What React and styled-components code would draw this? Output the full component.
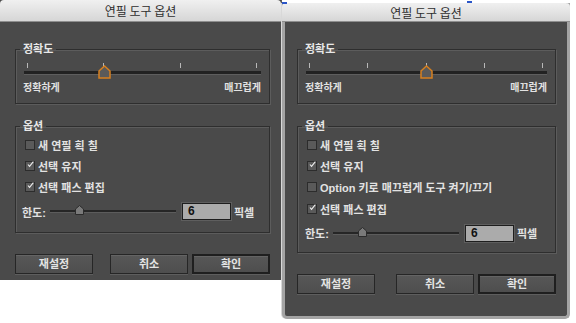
import styled, { createGlobalStyle } from 'styled-components'

const GlobalStyle = createGlobalStyle`
    html, body {
        margin: 0;
        padding: 0;
        background: #ffffff;
    }
    body {
        width: 576px;
        height: 323px;
        overflow: hidden;
        font-family: "Liberation Sans", "Noto Sans CJK KR", sans-serif;
    }
`

const checks = [
    { label: '새 연필 획 칠', on: false },
    { label: '선택 유지', on: true },
    { label: 'Option 키로 매끄럽게 도구 켜기/끄기', on: false, wide: true },
    { label: '선택 패스 편집', on: true },
]

function Check({ on, label }) {
    return (
        <CheckRow>
            <Box>
                {on && (
                    <svg width="11" height="11" viewBox="0 0 11 11">
                        <path d="M1.5 5.5 L4 8.5 L10 1" fill="none" stroke="#f0f0f0" strokeWidth="1.6" />
                    </svg>
                )}
            </Box>
            <span>{label}</span>
        </CheckRow>
    )
}

function Slider({ ticks, value }) {
    return (
        <SliderWrap>
            <Ticks>
                {Array.from({ length: ticks }).map((_, i) => <Tick key={i} />)}
            </Ticks>
            <Track>
                <Thumb $pos={value}>
                    <svg width="13" height="14" viewBox="0 0 13 14">
                        <path d="M1 6 L6.5 1 L12 6 L12 13 L1 13 Z" fill="#5a5a5a" stroke="#d7801f" strokeWidth="1.5" />
                    </svg>
                </Thumb>
            </Track>
            <Ends>
                <span>정확하게</span>
                <span>매끄럽게</span>
            </Ends>
        </SliderWrap>
    )
}

function Dialog({ wide }) {
    const list = checks.filter(c => wide || !c.wide)
    return (
        <Window $wide={wide}>
            <TitleBar $wide={wide}>연필 도구 옵션</TitleBar>
            <Body $wide={wide}>
                <Group>
                    <Legend>정확도</Legend>
                    <Slider ticks={wide ? 5 : 4} value={wide ? 50 : 33.3} />
                </Group>

                <Group $gap>
                    <Legend>옵션</Legend>
                    <Checks>
                        {list.map(c => <Check key={c.label} on={c.on} label={c.label} />)}
                    </Checks>
                    <LimitRow $wide={wide}>
                        <span>한도:</span>
                        <MiniTrack>
                            <MiniThumb>
                                <svg width="9" height="10" viewBox="0 0 9 10">
                                    <path d="M0.5 4 L4.5 0.5 L8.5 4 L8.5 9.5 L0.5 9.5 Z" fill="#7a7a7a" stroke="#2c2c2c" strokeWidth="1" />
                                </svg>
                            </MiniThumb>
                        </MiniTrack>
                        <Field>6</Field>
                        <span>픽셀</span>
                    </LimitRow>
                </Group>

                <Buttons>
                    <Button>재설정</Button>
                    <Button $push>취소</Button>
                    <Button $primary>확인</Button>
                </Buttons>
            </Body>
        </Window>
    )
}

export default function App() {
    return (
        <>
            <GlobalStyle />
            <Page>
                <Mark $x={282} $y={2} />
                <Mark $x={467} $y={1} />
                <Dialog />
                <Dialog wide />
            </Page>
        </>
    )
}

const Page = styled.div`
    position: relative;
    display: flex;
    align-items: flex-start;
    width: 576px;
    height: 323px;
`

const Mark = styled.div`
    position: absolute;
    left: ${p => p.$x}px;
    top: ${p => p.$y}px;
    width: 5px;
    height: 2px;
    background: #2a55c8;
    z-index: 2;
`

const Window = styled.div`
    box-sizing: border-box;
    display: flex;
    flex-direction: column;
    background: #4a4a4a;
    width: ${p => p.$wide ? '288px' : '281px'};
    height: ${p => p.$wide ? '316px' : '280px'};
    margin-top: ${p => p.$wide ? '3px' : '0'};
    margin-left: ${p => p.$wide ? '1px' : '0'};
    border: ${p => p.$wide ? '3px solid #a4a4a4' : '0'};
    border-top: 0;
    border-bottom-left-radius: ${p => p.$wide ? '5px' : '0'};
    border-bottom-right-radius: ${p => p.$wide ? '5px' : '0'};
    box-shadow: ${p => p.$wide ? '-1px 0 0 #d8d8d8' : '1px 0 0 #5c5c5c'};
`

const TitleBar = styled.div`
    box-sizing: border-box;
    height: ${p => p.$wide ? '19px' : '22px'};
    background: linear-gradient(#f0f0f0, #d6d6d6);
    border-bottom: 1px solid #8e8e8e;
    border-top-left-radius: 4px;
    border-top-right-radius: 4px;
    color: #2e2e2e;
    font-family: "Noto Sans CJK KR", sans-serif;
    font-size: 12px;
    line-height: ${p => p.$wide ? '19px' : '22px'};
    text-align: center;
    margin: ${p => p.$wide ? '0 -3px' : '0'};
`

const Body = styled.div`
    flex: 1;
    display: flex;
    flex-direction: column;
    padding: ${p => p.$wide ? '20px 11px 0 12px' : '20px 11px 0 15px'};
    color: #e2e2e2;
    font-family: "Liberation Sans", "Noto Sans CJK KR", sans-serif;
    font-size: 11px;
    font-weight: 700;
`

const Group = styled.fieldset`
    margin: ${p => p.$gap ? '15px 0 0' : '0'};
    padding: 0 0 0;
    border: 1px solid #2e2e2e;
    box-shadow: 1px 1px 0 #5c5c5c, inset 1px 1px 0 #5c5c5c;
    min-width: 0;
`

const Legend = styled.legend`
    margin-left: 4px;
    padding: 0 3px;
    line-height: 14px;
    font-size: 11px;
    color: #e8e8e8;
`

const SliderWrap = styled.div`
    padding: 7px 8px 9px;
`

const Ticks = styled.div`
    display: flex;
    justify-content: space-between;
    padding: 0 4px 0 3px;
    height: 6px;
`

const Tick = styled.div`
    width: 1px;
    height: 5px;
    background: #b8b8b8;
`

const Track = styled.div`
    position: relative;
    height: 3px;
    margin: 2px 0 0;
    background: #222;
    border-bottom: 1px solid #5e5e5e;
`

const Thumb = styled.div`
    position: absolute;
    top: -6px;
    left: calc(3px + (100% - 7px) * ${p => p.$pos / 100});
    width: 13px;
    height: 14px;
    margin-left: -6px;
    line-height: 0;
`

const Ends = styled.div`
    display: flex;
    justify-content: space-between;
    margin: 7px 0 0 -1px;
    line-height: 12px;
    font-size: 10px;
`

const Checks = styled.div`
    display: flex;
    flex-direction: column;
    padding: 1px 0 0 9px;
`

const CheckRow = styled.div`
    display: flex;
    align-items: center;
    gap: 3px;
    height: 21.3px;
`

const Box = styled.div`
    box-sizing: border-box;
    width: 10px;
    height: 10px;
    background: #5a5a5a;
    border: 1px solid #2c2c2c;
    display: flex;
    align-items: center;
    justify-content: center;
    overflow: visible;

    svg {
        margin: -3px 0 0 1px;
    }
`

const LimitRow = styled.div`
    display: flex;
    align-items: center;
    height: 22px;
    padding: ${p => p.$wide ? '3px 0 8px 7px' : '3px 0 9px 6px'};
`

const MiniTrack = styled.div`
    position: relative;
    width: 126px;
    height: 2px;
    margin: 0 6px 0 4px;
    background: #262626;
    border-bottom: 1px solid #5c5c5c;
`

const MiniThumb = styled.div`
    position: absolute;
    left: 25px;
    top: -5px;
    line-height: 0;
`

const Field = styled.div`
    box-sizing: border-box;
    width: 49px;
    height: 17px;
    padding-left: 5px;
    background: #ababab;
    border: 1px solid #1e1e1e;
    box-shadow: 0 0 0 1px #5e5e5e;
    color: #111;
    font-size: 12px;
    line-height: 15px;
    margin-right: 3px;
`

const Buttons = styled.div`
    display: flex;
    gap: 4px;
    margin-top: 21px;
`

const Button = styled.div`
    box-sizing: border-box;
    width: 78px;
    height: 20px;
    margin-left: ${p => p.$push ? 'auto' : '0'};
    background: linear-gradient(#575757, #4e4e4e);
    border: ${p => p.$primary ? '2px solid #1f1f1f' : '1px solid #262626'};
    box-shadow: 0 1px 0 #5e5e5e, inset 0 1px 0 #646464;
    color: #e4e4e4;
    font-size: 11px;
    line-height: ${p => p.$primary ? '16px' : '18px'};
    text-align: center;
`
